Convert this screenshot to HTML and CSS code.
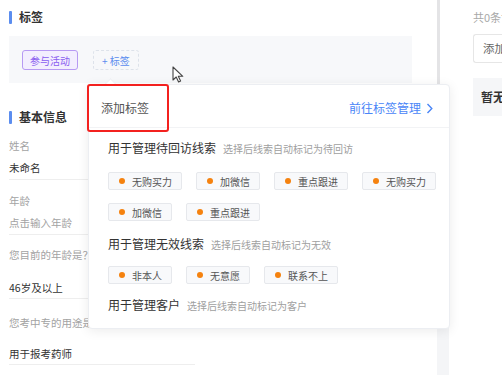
FILE: index.html
```html
<!DOCTYPE html>
<html lang="zh-CN">

<head>
    <meta charset="UTF-8">
    <meta name="viewport" content="width=device-width, initial-scale=1.0">
    <title>线索详情</title>
    <link rel="stylesheet" href="styles.css">
</head>

<body>
    <div class="page">
        <!-- 左侧：线索信息 -->
        <div class="main">
            <div class="sec-title">标签</div>
            <div class="tag-box">
                <span class="chip chip-purple">参与活动</span>
                <span class="chip chip-add">+ 标签</span>
            </div>

            <div class="sec-title sec-basic">基本信息</div>
            <div class="field">
                <div class="field-label">姓名</div>
                <div class="field-value">未命名</div>
            </div>
            <div class="field">
                <div class="field-label">年龄</div>
                <div class="field-value placeholder">点击输入年龄</div>
            </div>
            <div class="field field-q">
                <div class="field-label">您目前的年龄是？</div>
                <div class="field-value">46岁及以上</div>
            </div>
            <div class="field field-q">
                <div class="field-label">您考中专的用途是？</div>
                <div class="field-value">用于报考药师</div>
            </div>
        </div>

        <div class="scroll">
            <div class="scroll-line"></div>
            <div class="scroll-track"></div>
        </div>

        <!-- 右侧：跟进记录 -->
        <div class="side">
            <div class="side-count">共0条记录</div>
            <div class="side-input">添加跟进记录</div>
            <div class="side-empty">暂无跟进记录</div>
        </div>

        <!-- 添加标签弹层 -->
        <div class="popover">
            <div class="pop-head">
                <span class="pop-title">添加标签</span>
                <a class="pop-link">前往标签管理
                    <svg width="7" height="11" viewBox="0 0 7 11"><path d="M1.5 1 L5.8 5.5 L1.5 10" fill="none" stroke="#4a86f7" stroke-width="1.4"/></svg>
                </a>
            </div>
            <div class="pop-body">
                <div class="group-title">用于管理待回访线索<span class="group-sub">选择后线索自动标记为待回访</span></div>
                <div class="tag-list">
                    <span class="tag">无购买力</span>
                    <span class="tag">加微信</span>
                    <span class="tag">重点跟进</span>
                    <span class="tag">无购买力</span>
                    <span class="tag">加微信</span>
                    <span class="tag">重点跟进</span>
                </div>
                <div class="group-title">用于管理无效线索<span class="group-sub">选择后线索自动标记为无效</span></div>
                <div class="tag-list">
                    <span class="tag">非本人</span>
                    <span class="tag">无意愿</span>
                    <span class="tag">联系不上</span>
                </div>
                <div class="group-title">用于管理客户<span class="group-sub">选择后线索自动标记为客户</span></div>
            </div>
        </div>

        <!-- 标注框 -->
        <div class="mark"></div>

        <!-- 鼠标指针 -->
        <svg class="cursor" width="13" height="17" viewBox="0 0 13 17">
            <path d="M1 1 L1 14 L4.2 11 L6.6 16 L8.6 15.1 L6.3 10.3 L10.8 10.3 Z" fill="#fff" stroke="#444" stroke-width="1.1" stroke-linejoin="round"/>
        </svg>
    </div>
</body>
</html>
```

FILE: styles.css
```css
/* 通用样式 */
body {
    margin: 0;
    font-family: "Noto Sans CJK SC", "Liberation Sans", sans-serif;
    color: #333;
    background-color: #fff;
}

.page {
    position: relative;
    display: flex;
    width: 502px;
    height: 375px;
    overflow: hidden;
}

/* 左侧 */
.main {
    width: 403px;
    flex-shrink: 0;
    padding: 9px 25px 0 9px;
}

.sec-title {
    display: flex;
    align-items: center;
    gap: 7px;
    height: 16px;
    font-size: 12px;
    font-weight: 600;
    line-height: 16px;
}

.sec-title::before {
    content: "";
    width: 3px;
    height: 13px;
    border-radius: 1px;
    background-color: #5b8def;
}

.sec-basic {
    margin-top: 26px;
}

.tag-box {
    display: flex;
    gap: 15px;
    height: 20px;
    margin-top: 11px;
    padding: 14px 13px 13px;
    background-color: #f7f8fa;
}

.chip {
    display: inline-flex;
    align-items: center;
    justify-content: center;
    height: 18px;
    padding: 0 7px;
    font-size: 10px;
    border-radius: 3px;
}

.chip-purple {
    color: #8a5cf0;
    background-color: #f3eefe;
    border: 1px solid #b79af3;
}

.chip-add {
    padding: 0 8px;
    color: #5b8def;
    border: 1px dashed #dde2ea;
}

.field {
    width: 186px;
    margin-top: 13px;
}

.field-label {
    font-size: 10.5px;
    line-height: 16px;
    color: #a3a3a3;
    white-space: nowrap;
}

.field-value {
    margin-top: 6px;
    padding-bottom: 3px;
    font-size: 10.5px;
    line-height: 16px;
    border-bottom: 1px solid #eeeeee;
}

.field-value.placeholder {
    color: #a3a3a3;
}

.field-q {
    margin-top: 12px;
}

.field-q .field-value {
    margin-top: 17px;
    padding-bottom: 2px;
}

.field-q + .field-q {
    margin-top: 16px;
}

.field-q + .field-q .field-value {
    margin-top: 15px;
}

/* 滚动条 */
.scroll {
    display: flex;
    flex-direction: column;
    width: 12px;
    flex-shrink: 0;
}

.scroll-line {
    width: 3px;
    height: 200px;
    background-color: #e4e4e6;
}

.scroll-track {
    flex: 1;
    background-color: #f4f5f7;
}

/* 右侧 */
.side {
    flex: 1;
    min-width: 0;
    padding: 9px 0 0 24px;
    white-space: nowrap;
}

.side-count {
    font-size: 11px;
    line-height: 16px;
    color: #a8a8a8;
}

.side-input {
    height: 27px;
    margin-top: 9px;
    padding-left: 9px;
    font-size: 11.5px;
    line-height: 27px;
    color: #666;
    border: 1px solid #e6e6e6;
    border-right: none;
    border-radius: 3px 0 0 3px;
}

.side-empty {
    height: 38px;
    margin-top: 15px;
    padding-left: 8px;
    font-size: 12px;
    font-weight: 600;
    line-height: 38px;
    background-color: #f5f6f8;
}

/* 弹层 */
.popover {
    position: absolute;
    left: 88px;
    top: 84px;
    width: 360px;
    background-color: #fff;
    border: 1px solid #eceef2;
    border-radius: 4px;
    box-shadow: 0 2px 12px rgba(0, 0, 0, 0.08);
}

.popover::before {
    content: "";
    position: absolute;
    left: 17px;
    top: -5px;
    width: 8px;
    height: 8px;
    background-color: #fff;
    border-left: 1px solid #eceef2;
    border-top: 1px solid #eceef2;
    transform: rotate(45deg);
}

.pop-head {
    display: flex;
    justify-content: space-between;
    align-items: center;
    padding: 15px 16px 11px 12px;
    line-height: 16px;
    border-bottom: 1px solid #f2f3f5;
}

.pop-title {
    font-size: 12px;
    color: #555;
}

.pop-link {
    display: flex;
    align-items: center;
    gap: 5px;
    font-size: 12px;
    color: #4a86f7;
    cursor: pointer;
}

.pop-body {
    padding: 12px 8px 14px 19px;
}

.group-title {
    font-size: 12px;
    line-height: 16px;
    color: #333;
    white-space: nowrap;
}

.group-sub {
    margin-left: 7px;
    font-size: 10px;
    color: #a0a0a0;
}

.tag-list {
    display: flex;
    flex-wrap: wrap;
    gap: 13px 14px;
    margin: 15px 0 15px;
}

.tag-list + .group-title + .tag-list {
    margin: 13px 0 13px;
}

.tag {
    display: inline-flex;
    align-items: center;
    gap: 7px;
    height: 16px;
    padding: 0 9px 0 10px;
    font-size: 10px;
    color: #555;
    white-space: nowrap;
    background-color: #f8f9fb;
    border: 1px solid #e6e8ec;
    border-radius: 2px;
}

.tag::before {
    content: "";
    width: 6px;
    height: 6px;
    border-radius: 50%;
    background-color: #f5820f;
}

/* 标注框与指针 */
.mark {
    position: absolute;
    left: 87px;
    top: 84px;
    width: 78px;
    height: 44px;
    border: 2px solid #f3211f;
    border-radius: 3px;
}

.cursor {
    position: absolute;
    left: 172px;
    top: 66px;
}
```
